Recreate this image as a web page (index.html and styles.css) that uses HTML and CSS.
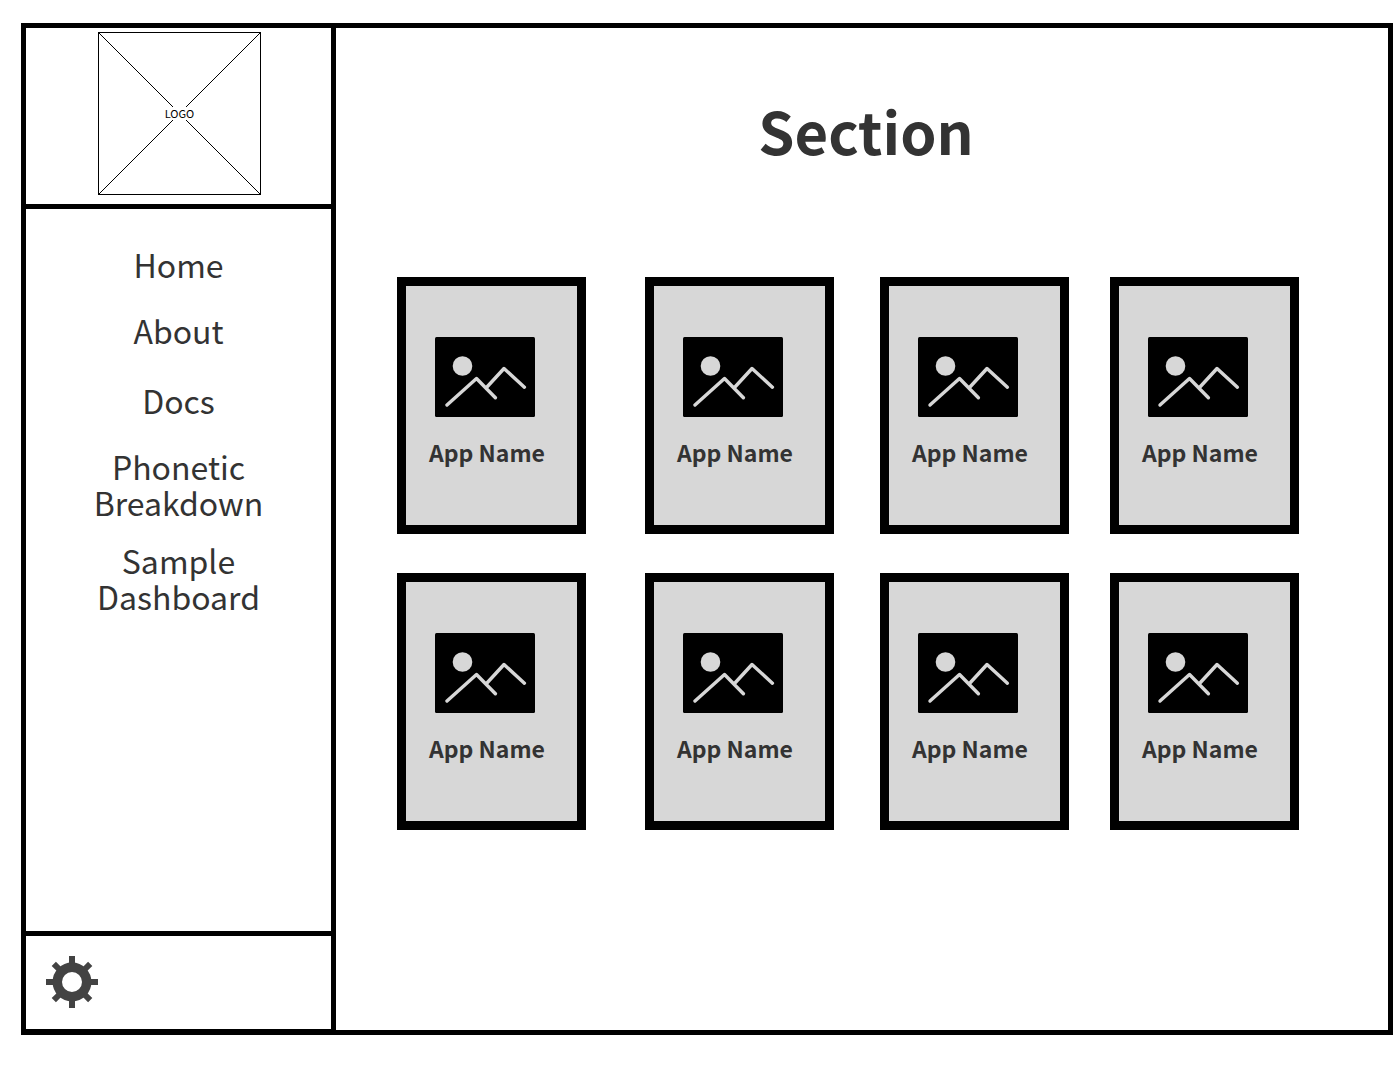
FILE: index.html
```html
<!DOCTYPE html>
<html lang="en">
<head>
<meta charset="utf-8">
<title>Section</title>
<link rel="stylesheet" href="styles.css">
</head>
<body>
<svg class="sprite" aria-hidden="true">
  <symbol id="picture" viewBox="0 0 100 80">
    <rect width="100" height="80" rx="1.5"/>
    <circle cx="27.5" cy="29" r="9.8" fill="#d7d7d7"/>
    <path d="M12 68L41.5 41.5L60.4 60.7M51.5 50.5L69 31.5L89.4 50.2" fill="none" stroke="#d7d7d7" stroke-width="3.4" stroke-linecap="round" stroke-linejoin="round"/>
  </symbol>
</svg>
<div class="frame">
  <aside class="sidebar">
    <div class="brand">
      <svg class="logo" viewBox="0 0 163 163" role="img" aria-label="Logo">
        <rect x="0.5" y="0.5" width="162" height="162" fill="none" stroke="#000"/>
        <path d="M1 1L75 75M88 75L162 1M1 162L75 88M88 88L162 162" stroke="#000" fill="none"/>
        <text class="logo-text" x="81.5" y="86" text-anchor="middle">LOGO</text>
      </svg>
    </div>
    <nav class="nav">
      <ul class="nav-list">
        <li><a href="#home">Home</a></li>
        <li><a href="#about">About</a></li>
        <li class="nav-spaced"><a href="#docs">Docs</a></li>
        <li><a href="#phonetic">Phonetic<br>Breakdown</a></li>
        <li class="nav-tight"><a href="#dashboard">Sample<br>Dashboard</a></li>
      </ul>
    </nav>
    <div class="tools">
      <button class="settings" type="button" aria-label="Settings">
        <svg width="52" height="52" viewBox="-26 -26 52 52" fill="none" stroke="#434343">
          <circle r="14.7" stroke-width="9.4"/>
          <path d="M0 -26V-18M0 26V18M-26 0H-18M26 0H18M-18.2 -18.2L-12.5 -12.5M18.2 -18.2L12.5 -12.5M-18.2 18.2L-12.5 12.5M18.2 18.2L12.5 12.5" stroke-width="6"/>
        </svg>
      </button>
    </div>
  </aside>
  <main class="main">
    <h1 class="title">Section</h1>
    <div class="apps">
      <article class="card"><svg class="picture" aria-hidden="true"><use href="#picture"/></svg><h2 class="name">App Name</h2></article>
      <article class="card"><svg class="picture" aria-hidden="true"><use href="#picture"/></svg><h2 class="name">App Name</h2></article>
      <article class="card"><svg class="picture" aria-hidden="true"><use href="#picture"/></svg><h2 class="name">App Name</h2></article>
      <article class="card"><svg class="picture" aria-hidden="true"><use href="#picture"/></svg><h2 class="name">App Name</h2></article>
      <article class="card"><svg class="picture" aria-hidden="true"><use href="#picture"/></svg><h2 class="name">App Name</h2></article>
      <article class="card"><svg class="picture" aria-hidden="true"><use href="#picture"/></svg><h2 class="name">App Name</h2></article>
      <article class="card"><svg class="picture" aria-hidden="true"><use href="#picture"/></svg><h2 class="name">App Name</h2></article>
      <article class="card"><svg class="picture" aria-hidden="true"><use href="#picture"/></svg><h2 class="name">App Name</h2></article>
    </div>
  </main>
</div>
</body>
</html>
```
FILE: styles.css
```css
* {
  box-sizing: border-box;
}

body {
  margin: 0;
  padding: 23px 7px 45px 21px;
  background: #fff;
  color: #333;
  font-family: "Noto Sans CJK JP", "Noto Sans", sans-serif;
}

.sprite {
  display: none;
}

.frame {
  display: flex;
  min-height: calc(100vh - 68px);
  border: 5px solid #000;
}

.sidebar {
  display: flex;
  flex-direction: column;
  flex: none;
  width: 310px;
  border-right: 5px solid #000;
}

.brand {
  display: flex;
  justify-content: center;
  padding: 4px 0 9px 2px;
  border-bottom: 5px solid #000;
}

.logo {
  display: block;
  width: 163px;
  height: 163px;
}

.logo-text {
  font-size: 11px;
  fill: #000;
}

.nav {
  flex: 1;
  padding: 37px 16px;
}

.nav-list {
  margin: 0;
  padding: 0;
  list-style: none;
  font-size: 32px;
  line-height: 36px;
  text-align: center;
}

.nav-list li {
  margin-bottom: 30px;
}

.nav-list .nav-spaced {
  margin-top: 34px;
}

.nav-list .nav-tight {
  margin-top: -8px;
}

.nav-list a {
  color: inherit;
  text-decoration: none;
}

.tools {
  padding: 20px 20px 21px;
  border-top: 5px solid #000;
  border-bottom: 1px solid #000;
}

.settings {
  display: block;
  padding: 0;
  border: 0;
  background: none;
  cursor: pointer;
}

.settings svg {
  display: block;
}

.main {
  flex: 1;
  min-width: 0;
}

.title {
  margin: 0;
  padding: 70px 0 0 8px;
  font-size: 58px;
  line-height: 64px;
  text-align: center;
}

.apps {
  display: grid;
  grid-template-columns: 248fr 235fr 230fr 189fr;
  row-gap: 39px;
  padding: 115px 89px 40px 61px;
}

.card {
  width: 189px;
  height: 257px;
  padding: 51px 0 0 23px;
  border: 9px solid #000;
  background: #d7d7d7;
}

.picture {
  display: block;
  width: 100px;
  height: 80px;
  margin-left: 6px;
}

.name {
  margin: 22px 0 0;
  font-size: 23px;
  line-height: 26px;
}
```
